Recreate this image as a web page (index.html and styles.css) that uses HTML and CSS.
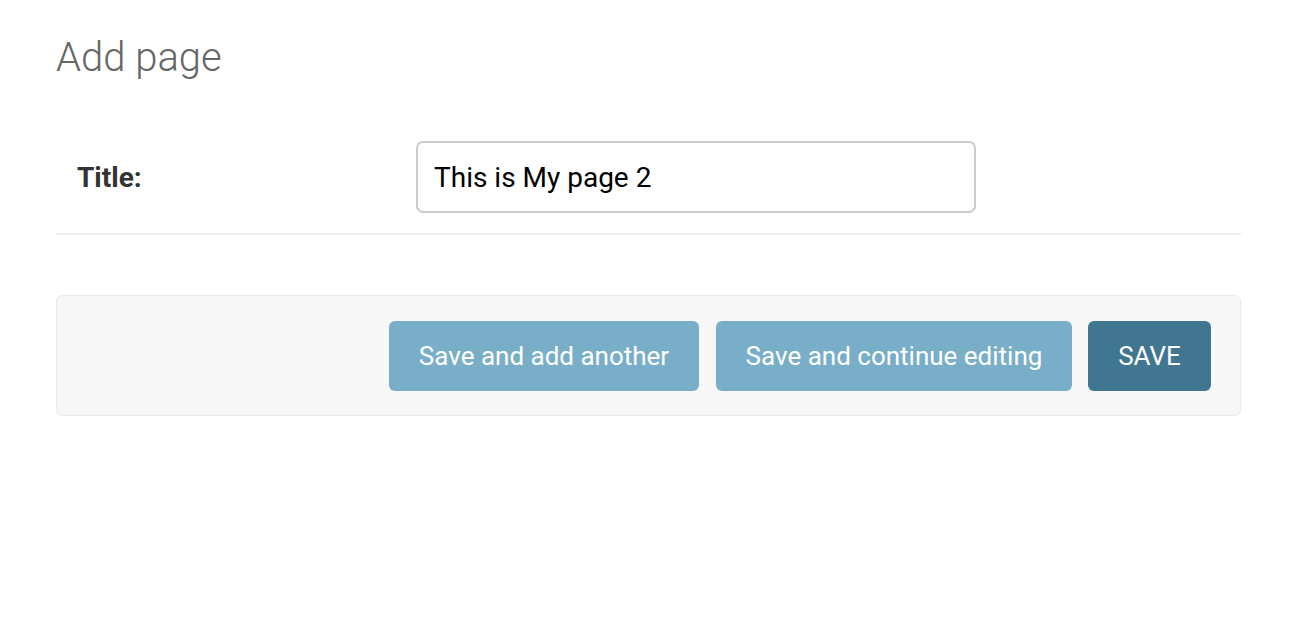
FILE: index.html
```html
<!DOCTYPE html>
<html>
<head>
<meta charset="utf-8">
<link rel="stylesheet" href="styles.css">
</head>
<body>
<div class="content">
  <h1 class="title">Add page</h1>
  <form class="form">
    <div class="form-row">
      <label class="label" for="id_title">Title:</label>
      <input class="text-input" id="id_title" type="text" value="This is My page 2">
    </div>
    <div class="submit-row">
      <button type="button" class="btn btn-light btn-another">Save and add another</button>
      <button type="button" class="btn btn-light btn-continue">Save and continue editing</button>
      <button type="button" class="btn btn-dark">SAVE</button>
    </div>
  </form>
</div>
</body>
</html>
```
FILE: styles.css
```css
html, body {
  margin: 0;
  padding: 0;
  background: #fff;
  font-family: Roboto, "Noto Sans", sans-serif;
}
.content {
  padding: 0 58px 0 56px;
}
.title {
  margin: 0;
  padding-top: 34px;
  font-size: 40px;
  line-height: 48px;
  font-weight: 300;
  color: #666;
}
.form {
  margin-top: 39px;
}
.form-row {
  display: flex;
  align-items: center;
  padding: 20px 0 20px 0;
  border-bottom: 2px solid #eeeeee;
}
.label {
  width: 339px;
  padding-left: 21px;
  font-size: 28px;
  font-weight: 700;
  color: #333;
}
.text-input {
  box-sizing: border-box;
  width: 560px;
  height: 72px;
  padding: 0 16px;
  border: 2px solid #ccc;
  border-radius: 7px;
  font-family: Roboto, sans-serif;
  font-size: 28px;
  color: #000;
  outline: none;
}
.submit-row {
  margin-top: 60px;
  display: flex;
  justify-content: flex-end;
  gap: 17px;
  padding: 25px 29px 24px 0;
  background: #f7f7f7;
  border: 1px solid #eaeaea;
  border-radius: 6px;
}
.btn {
  height: 70px;
  border: 0;
  border-radius: 6px;
  font-family: Roboto, sans-serif;
  font-size: 26px;
  color: #fff;
  padding: 0;
}
.btn-light {
  background: #79aec8;
}
.btn-dark {
  background: #417690;
}
.btn-another { width: 310px; }
.btn-continue { width: 356px; }
.btn-dark { width: 123px; margin-left: -1px; }
```
